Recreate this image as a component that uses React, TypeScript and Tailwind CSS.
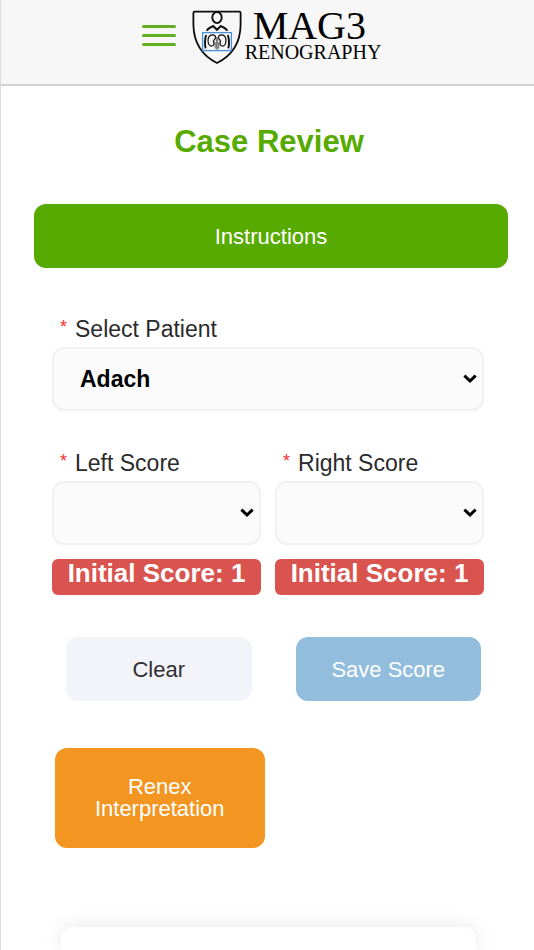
import { useState } from 'react';
import type { ReactNode } from 'react';

const SCORES = ['1', '2', '3', '4', '5'];

function ShieldLogo() {
  return (
    <svg viewBox="0 0 50 54" className="w-[50px] h-[54px] shrink-0" fill="none" stroke="#0d0d0d" aria-hidden="true">
      <path
        d="M2.6 1.6H47.4Q48.6 1.6 48.6 3V15C48.4 33 41 45 25 53C9 45 1.8 33 1.4 15V3Q1.4 1.6 2.6 1.6Z"
        strokeWidth="1.8"
        strokeLinejoin="round"
      />
      {/* head and shoulders */}
      <ellipse cx="25" cy="7.6" rx="4.7" ry="5.5" strokeWidth="1.9" />
      <path d="M14.8 20.8C15.6 17.8 19 17.6 21.2 16L25 19.8L28.8 16C31 17.6 34.4 17.8 35.2 20.8" strokeWidth="2" />
      {/* camera field of view */}
      <rect x="10.6" y="22.6" width="28.8" height="18" stroke="#4a90d9" strokeWidth="1.3" />
      {/* arms */}
      <path d="M14.2 25C12.8 29 12.8 34 13.6 38.4M35.8 25C37.2 29 37.2 34 36.4 38.4" strokeWidth="1.9" />
      {/* kidneys */}
      <path
        d="M20.6 24.8C17.2 24.6 16 27.8 16 30.6C16 34 17.6 36.4 20 36C22.4 35.6 22.4 33 21.4 31.6C20.8 30.4 23.8 29.4 23.6 27.2C23.4 25.6 22.2 24.9 20.6 24.8Z"
        strokeWidth="1.2"
      />
      <path
        d="M29.4 24.8C32.8 24.6 34 27.8 34 30.6C34 34 32.4 36.4 30 36C27.6 35.6 27.6 33 28.6 31.6C29.2 30.4 26.2 29.4 26.4 27.2C26.6 25.6 27.8 24.9 29.4 24.8Z"
        strokeWidth="1.2"
      />
      <path d="M24.4 27V39.4M25.8 27V39.4M21.4 31L23.2 33V38.6M28.6 31L26.8 33V38.6" strokeWidth="0.8" stroke="#444444" />
    </svg>
  );
}

interface SelectFieldProps {
  id: string;
  label: string;
  value: string;
  onChange: (value: string) => void;
  children: ReactNode;
}

function SelectField({ id, label, value, onChange, children }: SelectFieldProps) {
  return (
    <div>
      <label htmlFor={id} className="flex gap-2 pl-2 text-[23px] leading-9 text-[#2b2b2b]">
        <span className="text-[18px] leading-8 text-red-500">*</span>
        {label}
      </label>
      <div className="relative">
        <select
          id={id}
          value={value}
          onChange={(e) => onChange(e.target.value)}
          className="block w-full h-16 appearance-none rounded-xl border-2 border-[#f1f1f1] bg-[#fbfbfb] pl-[26px] pr-8 text-[23px] font-bold text-black"
        >
          {children}
        </select>
        <svg
          viewBox="0 0 14 10"
          className="pointer-events-none absolute right-[7px] top-[27px] h-2.5 w-3.5"
          fill="none"
          stroke="#000"
          strokeWidth="3"
          aria-hidden="true"
        >
          <path d="M1.4 1.6L7 7L12.6 1.6" />
        </svg>
      </div>
    </div>
  );
}

function InitialScore({ score }: { score: number }) {
  return (
    <div className="mt-3.5 rounded-md bg-[#d9534f] pb-2 text-center text-[26px] leading-7 font-bold text-white">
      Initial Score: {score}
    </div>
  );
}

export default function App() {
  const [patient, setPatient] = useState('Adach');
  const [left, setLeft] = useState('');
  const [right, setRight] = useState('');

  const handleClear = () => {
    setLeft('');
    setRight('');
  };

  return (
    <div className="flex min-h-screen flex-col border-l border-[#dedede] bg-white font-['Liberation_Sans',Arial,sans-serif]">
      <header className="flex items-start justify-center border-b-2 border-[#d3d3d3] bg-[#f7f7f7] pt-2.5 pb-5 pr-3">
        <button type="button" aria-label="Menu" className="mt-[15px] mr-4 flex flex-col gap-1.5">
          <span className="h-[3px] w-[34px] rounded-full bg-[#62b022]" />
          <span className="h-[3px] w-[34px] rounded-full bg-[#62b022]" />
          <span className="h-[3px] w-[34px] rounded-full bg-[#62b022]" />
        </button>
        <a href="#" className="flex items-start gap-[3px] font-['Liberation_Serif',serif] text-black">
          <ShieldLogo />
          <span className="flex flex-col">
            <span className="pl-2 text-[40px] leading-8">MAG3</span>
            <span className="text-[20px] leading-5">RENOGRAPHY</span>
          </span>
        </a>
      </header>

      <main className="flex grow flex-col pl-[33px] pr-[26px]">
        <h1 className="mt-9 pr-1 text-center text-[31px] leading-10 font-bold text-[#57ab00]">Case Review</h1>

        <button type="button" className="mt-[42px] h-16 w-full rounded-xl bg-[#57ab00] text-[22px] text-white">
          Instructions
        </button>

        <form className="mt-[43px] pl-[18px] pr-6" onSubmit={(e) => e.preventDefault()}>
          <SelectField id="patient" label="Select Patient" value={patient} onChange={setPatient}>
            <option value="Adach">Adach</option>
          </SelectField>

          <div className="mt-[34px] grid grid-cols-2 gap-3.5">
            <div>
              <SelectField id="left-score" label="Left Score" value={left} onChange={setLeft}>
                <option value="" />
                {SCORES.map((s) => (
                  <option key={s} value={s}>{s}</option>
                ))}
              </SelectField>
              <InitialScore score={1} />
            </div>
            <div>
              <SelectField id="right-score" label="Right Score" value={right} onChange={setRight}>
                <option value="" />
                {SCORES.map((s) => (
                  <option key={s} value={s}>{s}</option>
                ))}
              </SelectField>
              <InitialScore score={1} />
            </div>
          </div>

          <div className="mt-[42px] grid grid-cols-2 gap-11 pl-3.5 pr-[3px]">
            <button
              type="button"
              onClick={handleClear}
              className="h-16 rounded-xl bg-[#f3f4f9] text-[22px] text-[#2f2f33]"
            >
              Clear
            </button>
            <button type="submit" className="h-16 rounded-xl bg-[#93bddc] text-[22px] text-white">
              Save Score
            </button>
          </div>

          <div className="mt-[47px] grid grid-cols-2 pl-[3px] pr-2.5">
            <button
              type="button"
              className="rounded-xl bg-[#f39621] px-8 py-7 text-[22px] leading-[22px] text-white"
            >
              Renex Interpretation
            </button>
          </div>
        </form>

        <section className="mt-[79px] ml-[27px] mr-8 grow rounded-t-xl bg-white shadow-[0_0_20px_rgba(0,0,0,0.1)]" />
      </main>
    </div>
  );
}
